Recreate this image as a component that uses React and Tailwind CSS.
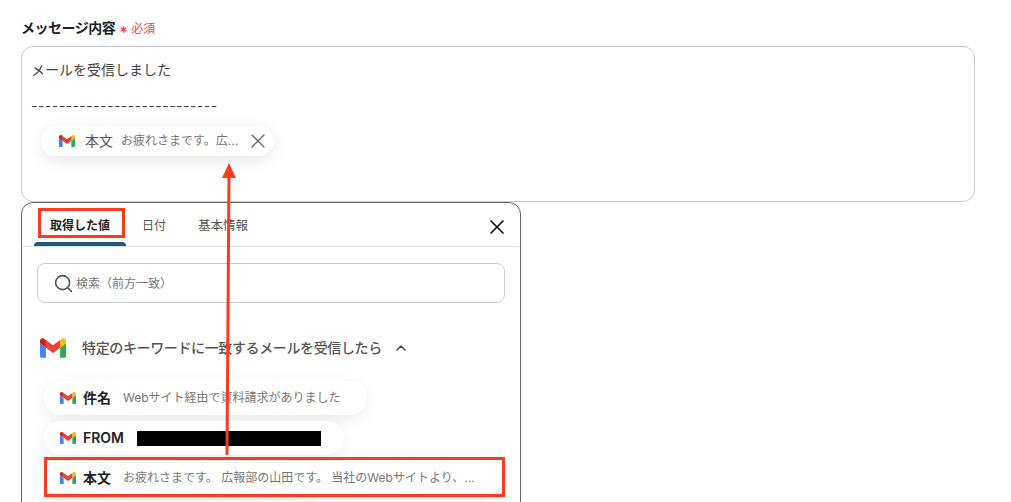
import { Asterisk, ChevronUp, Search, X } from 'lucide-react';

function GmailIcon({ className }) {
  return (
    <svg viewBox="52 42 88 66" className={className}>
      <path fill="#4285f4" d="M58 108h14V74L52 59v43c0 3.32 2.69 6 6 6" />
      <path fill="#34a853" d="M120 108h14c3.32 0 6-2.69 6-6V59l-20 15" />
      <path fill="#fbbc04" d="M120 48v26l20-15v-8c0-7.42-8.47-11.65-14.4-7.2" />
      <path fill="#ea4335" d="M72 74V48l24 18 24-18v26L96 92" />
      <path fill="#c5221f" d="M52 51v8l20 15V48l-5.6-4.2c-5.94-4.45-14.4-.22-14.4 7.2" />
    </svg>
  );
}

function ValuePill({ name, value, className, nameWidth = 'w-[40px]', children }) {
  return (
    <div className={`flex h-[34px] items-center rounded-full bg-white pl-4 shadow-[0_4px_16px_rgba(0,0,0,0.08)] ${className}`}>
      <GmailIcon className="h-[12px] w-[16px] shrink-0" />
      <span className={`ml-[7px] shrink-0 text-sm font-semibold text-[#222] ${nameWidth}`}>{name}</span>
      {value && <span className="truncate text-xs text-[#777]">{value}</span>}
      {children}
    </div>
  );
}

export default function App() {
  return (
    <div className="relative h-[502px] w-[1011px] overflow-hidden bg-white pl-[21px] pt-[18px] font-['Inter','Noto_Sans_CJK_JP',sans-serif]">
      <div className="flex h-[20px] items-center">
        <span className="text-sm leading-5 font-semibold tracking-[-0.5px] text-[#222]">メッセージ内容</span>
        <Asterisk className="ml-[3px] mt-[3px] h-[11px] w-[11px] text-[#f0455a]" strokeWidth={3} />
        <span className="ml-[2px] mt-[2px] text-xs leading-4 text-[#f0455a]">必須</span>
      </div>

      <div className="mt-2 h-[156px] w-[954px] rounded-xl border border-[#c5cad3] px-[9px] pt-[14px]">
        <p className="text-sm leading-[18px] text-[#444]">メールを受信しました</p>
        <p className="mt-[18px] text-sm leading-[18px] tracking-[0.47px] text-[#444]">---------------------------</p>
        <div className="ml-[10px] mt-[11px] flex h-[30px] w-[233px] items-center rounded-full bg-white pl-[18px] shadow-[0_4px_16px_rgba(0,0,0,0.1)]">
          <GmailIcon className="h-[12px] w-[16px] shrink-0" />
          <span className="ml-[10px] text-sm text-[#555]">本文</span>
          <span className="ml-[8px] text-xs text-[#777]">お疲れさまです。広...</span>
          <X className="ml-[8px] h-[24px] w-[24px] shrink-0 text-[#666]" strokeWidth={1.25} />
        </div>
      </div>

      <div className="h-[340px] w-[500px] rounded-t-xl border border-[#666] bg-white">
        <div className="relative mx-px flex h-[44px] items-center border-b border-[#ddd] pl-[27px] pt-[3px]">
          <span className="w-[92px] text-xs leading-4 font-semibold text-[#222]">取得した値</span>
          <span className="w-[56px] text-xs leading-4 text-[#555]">日付</span>
          <span className="text-[12.5px] leading-4 text-[#555]">基本情報</span>
          <X className="absolute right-[10px] top-[12px] h-[24px] w-[24px] text-[#111]" strokeWidth={1.75} />
          <div className="absolute bottom-0 left-[11px] h-[4px] w-[92px] rounded-t bg-[#1a5c78]" />
        </div>

        <div className="mx-[15px] mt-4 flex h-[40px] w-[468px] items-center rounded-lg border border-[#c8ccd0] pl-[15px]">
          <Search className="h-[21px] w-[21px] text-[#555]" strokeWidth={1.75} />
          <span className="ml-[2px] mt-[2px] text-xs text-[#777]">検索（前方一致）</span>
        </div>

        <div className="mt-[34px] flex h-[22px] items-center pl-[18px]">
          <GmailIcon className="h-[20px] w-[26px]" />
          <span className="ml-[16px] text-sm font-medium tracking-[-0.37px] text-[#555]">特定のキーワードに一致するメールを受信したら</span>
          <ChevronUp className="ml-[11px] h-[16px] w-[16px] text-[#444]" strokeWidth={2.25} />
        </div>

        <div className="mt-[22px] flex flex-col gap-[6px] pl-[22px]">
          <ValuePill name="件名" value="Webサイト経由で資料請求がありました" className="w-[323px]" />
          <ValuePill name="FROM" nameWidth="w-[54px]" className="w-[300px]">
            <div className="h-[15px] w-[184px] bg-black" />
          </ValuePill>
          <ValuePill name="本文" value="お疲れさまです。 広報部の山田です。 当社のWebサイトより、..." className="w-[458px]" />
          <div className="h-[34px] w-[271px] rounded-full bg-white shadow-[0_4px_16px_rgba(0,0,0,0.08)]" />
        </div>
      </div>

      {/* annotations */}
      <div className="absolute left-[38px] top-[208px] h-[30px] w-[87px] border-[3px] border-[#fb3a1e]" />
      <div className="absolute left-[44px] top-[457px] h-[40px] w-[461px] border-[3px] border-[#fb3a1e]" />
      <svg className="absolute left-0 top-0 h-[502px] w-[1011px]" viewBox="0 0 1011 502">
        <path d="M227 455 L229 172" stroke="#fb3a1e" strokeWidth="3" fill="none" />
        <path d="M229 163 L236 178 L222 178 Z" fill="#fb3a1e" />
      </svg>
    </div>
  );
}
